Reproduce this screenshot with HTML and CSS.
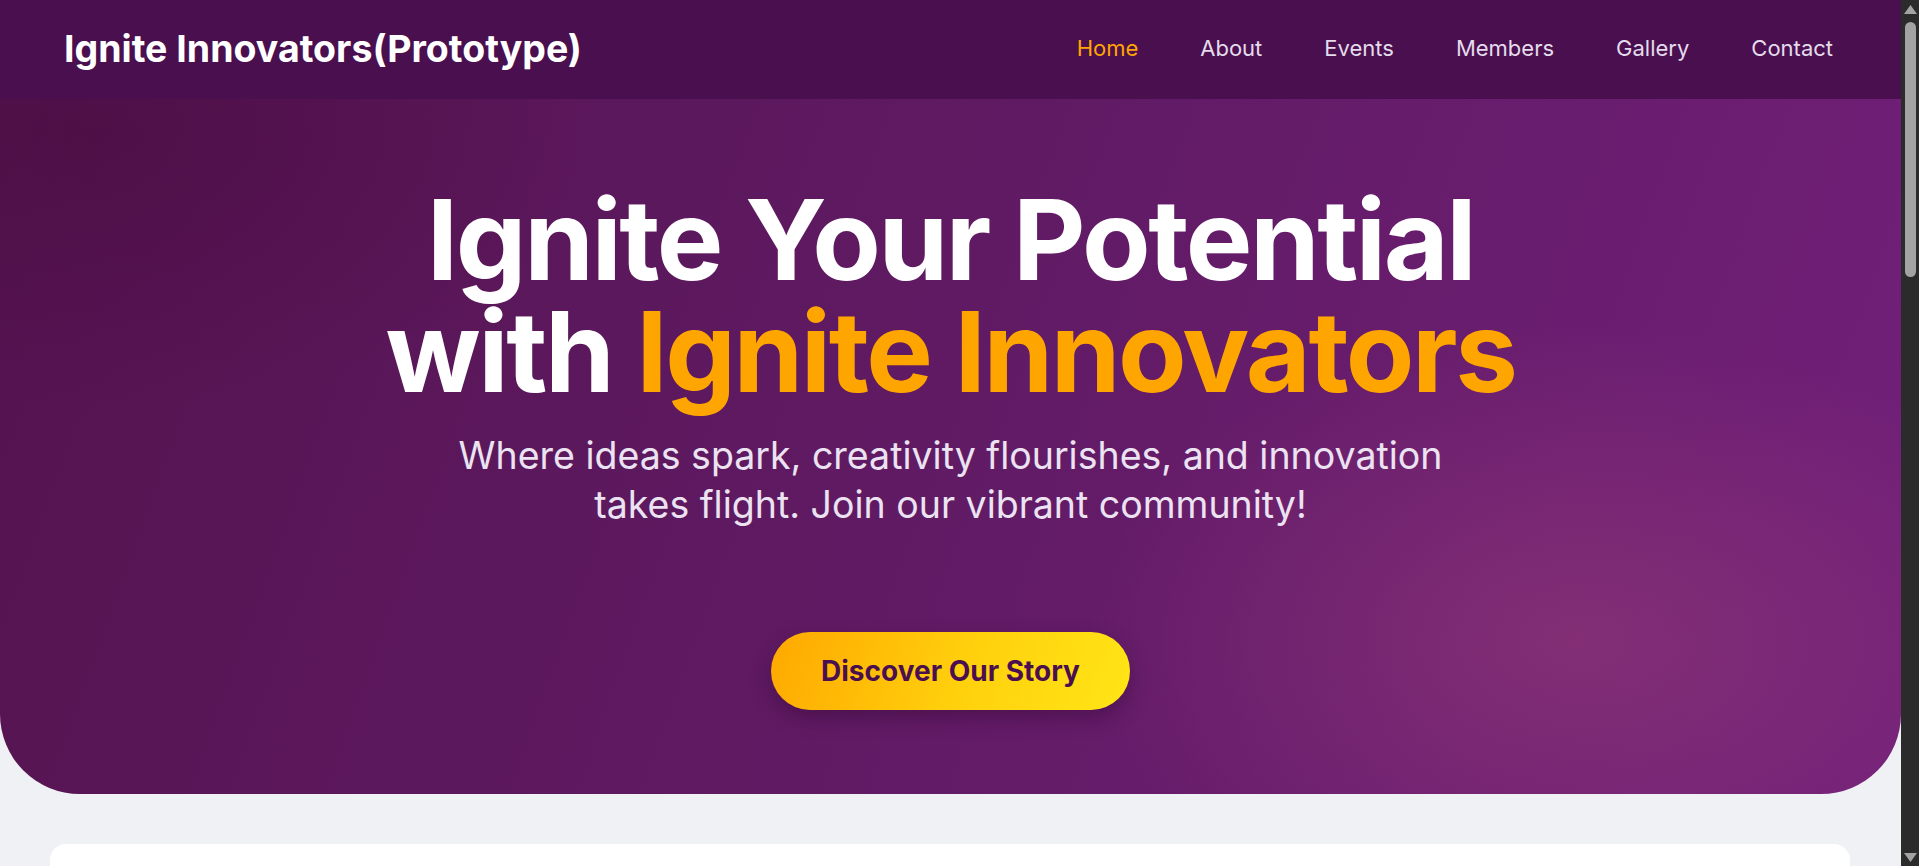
FILE: index.html
```html
<!DOCTYPE html>
<html lang="en">
<head>
<meta charset="utf-8">
<title>Ignite Innovators</title>
<link rel="stylesheet" href="styles.css">
</head>
<body>
<div class="page">
<header class="site-header">
  <div class="brand">Ignite Innovators(Prototype)</div>
  <nav class="nav">
    <a class="nav-link active" href="#">Home</a>
    <a class="nav-link" href="#">About</a>
    <a class="nav-link" href="#">Events</a>
    <a class="nav-link" href="#">Members</a>
    <a class="nav-link" href="#">Gallery</a>
    <a class="nav-link" href="#">Contact</a>
  </nav>
</header>
<section class="hero">
  <h1 class="hero-title">Ignite Your Potential<br>with <span class="accent">Ignite Innovators</span></h1>
  <p class="hero-sub">Where ideas spark, creativity flourishes, and innovation takes flight. Join our vibrant community!</p>
  <a class="cta" href="#">Discover Our Story</a>
</section>
<main class="content">
  <section class="card">
    <h2 class="card-title">About Us</h2>
    <p class="card-text">Ignite Innovators is a community of curious minds who love to build, share and learn together.</p>
  </section>
</main>
</div>
<div class="scrollbar" aria-hidden="true">
  <svg class="scrollbar-svg" viewBox="0 0 18 866" width="18" height="866" preserveAspectRatio="none">
    <rect x="0" y="0" width="18" height="866" fill="#2b2b2b"/>
    <polygon points="9.5,5 16,14 3,14" fill="#a3a3a3"/>
    <rect x="4" y="22" width="11" height="255" rx="5.5" fill="#a3a3a3"/>
    <polygon points="3,853 16,853 9.5,862" fill="#a3a3a3"/>
  </svg>
</div>
</body>
</html>
```
FILE: styles.css
```css
* { box-sizing: border-box; }
html, body { height: 100%; }
body {
  margin: 0;
  overflow: hidden;
  display: flex;
  background: #f0f1f5;
  font-family: Inter, "Noto Sans", sans-serif;
  color: #222;
}
.page {
  flex: 1;
  min-width: 0;
  height: 100vh;
  overflow: hidden;
  background: #f0f1f5;
}
.scrollbar {
  flex: 0 0 18px;
  width: 18px;
  height: 100vh;
  background: #2b2b2b;
}
.scrollbar-svg { display: block; }
.site-header {
  height: 99px;
  background: #4a0f4f;
  display: flex;
  align-items: center;
  justify-content: space-between;
  padding: 0 60px 3px 64px;
}
.brand {
  color: #fff;
  font-weight: 700;
  font-size: 37.5px;
}
.nav { display: flex; gap: 46px; }
.nav-link {
  color: #e4dcec;
  text-decoration: none;
  font-size: 22px;
  padding: 0 8px;
}
.nav-link.active { color: #ffa500; }
.hero {
  background:
    radial-gradient(ellipse 700px 450px at 83% 78%, rgba(150, 60, 120, 0.55), rgba(150, 60, 120, 0) 70%),
    radial-gradient(ellipse 700px 400px at 5% 5%, rgba(70, 10, 60, 0.45), rgba(70, 10, 60, 0) 70%),
    linear-gradient(110deg, #54134f 0%, #5f1a62 45%, #72207a 100%);
  border-radius: 0 0 80px 80px;
  padding: 84px 40px 84px;
  display: flex;
  flex-direction: column;
  align-items: center;
  text-align: center;
}
.hero-title {
  margin: 0;
  color: #fff;
  font-size: 112px;
  line-height: 1;
  font-weight: 700;
  letter-spacing: -0.022em;
}
.accent { color: #ffa500; }
.hero-sub {
  margin: 24px 0 0;
  max-width: 1000px;
  color: #ece3f2;
  font-size: 37.5px;
  line-height: 49px;
}
.cta {
  margin-top: 103px;
  display: inline-flex;
  align-items: center;
  height: 78px;
  padding: 0 50px;
  border-radius: 39px;
  background: linear-gradient(110deg, #ffa800 0%, #ffd10d 55%, #ffe516 100%);
  color: #4a0f4f;
  font-weight: 700;
  font-size: 28px;
  text-decoration: none;
  box-shadow: 0 8px 20px rgba(40, 0, 40, 0.35);
}
.content { padding: 50px 51px 60px 50px; }
.card {
  background: #fff;
  border-radius: 16px;
  padding: 40px;
  min-height: 300px;
}
.card-title { margin: 0 0 16px; font-size: 32px; color: #4a0f4f; }
.card-text { margin: 0; font-size: 18px; }
```
